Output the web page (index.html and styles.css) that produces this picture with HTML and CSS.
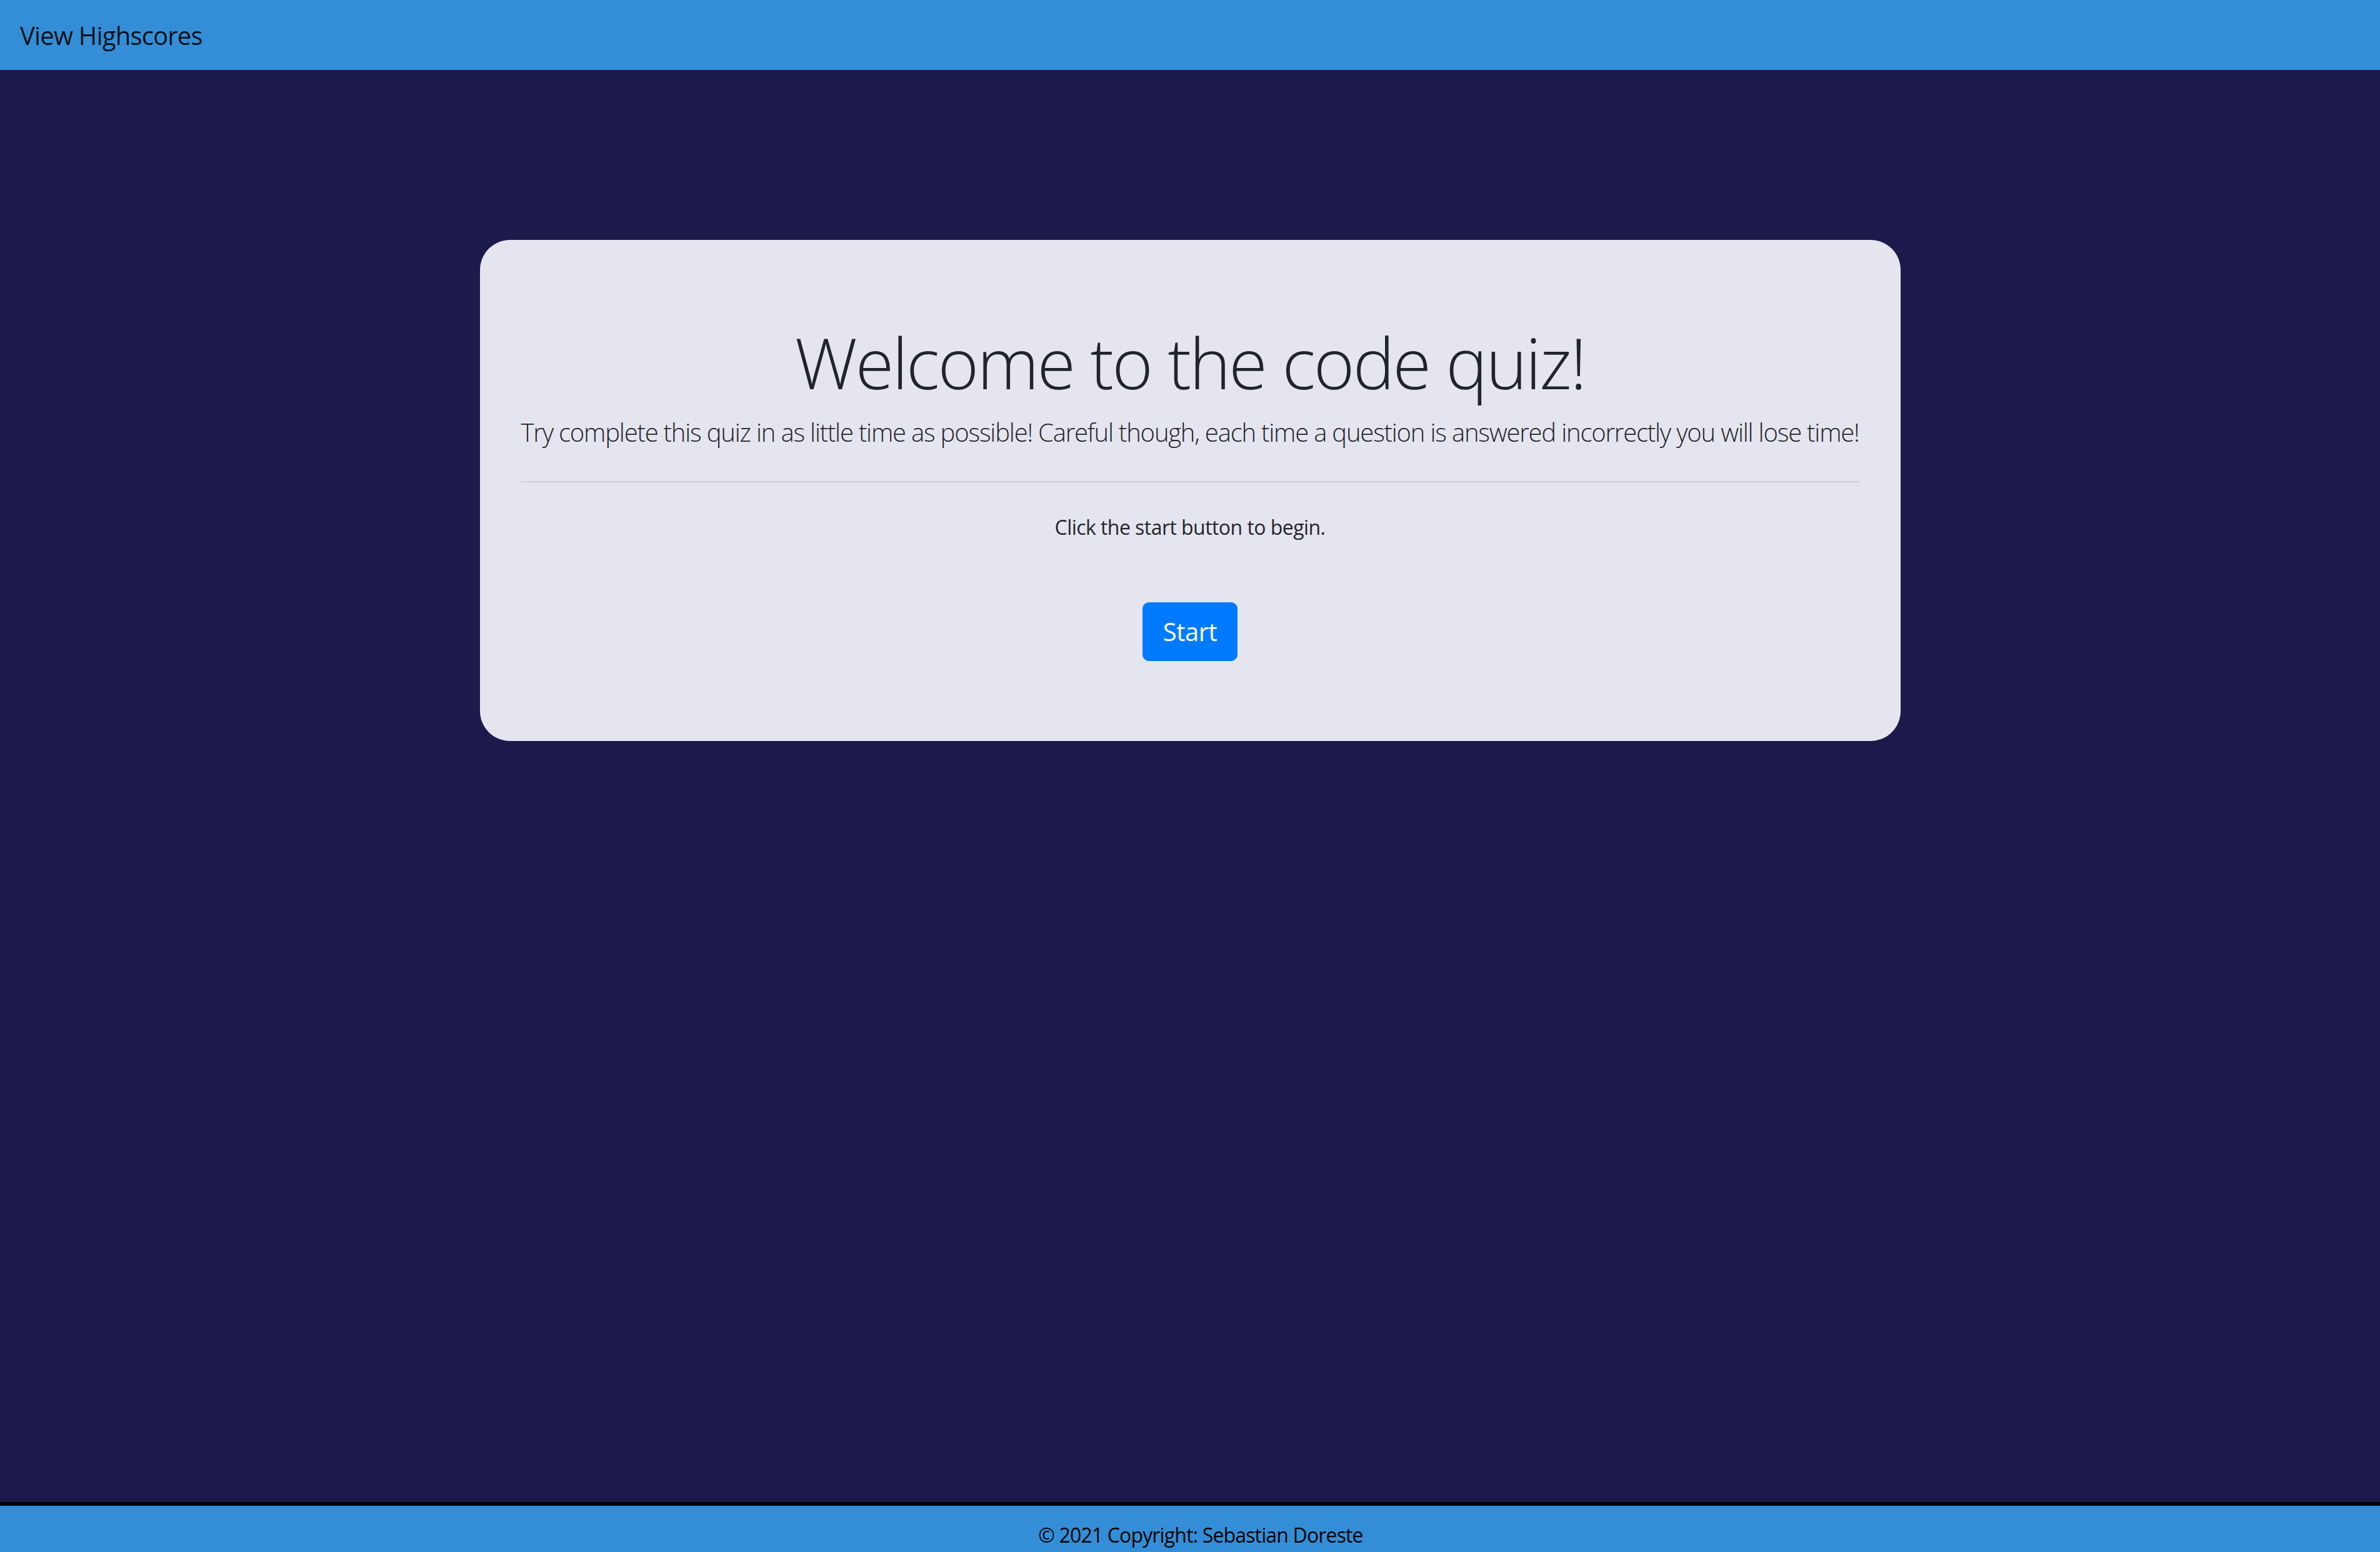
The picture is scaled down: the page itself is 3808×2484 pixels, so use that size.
FILE: index.html
```html
<!DOCTYPE html>
<html lang="en">
<head>
<meta charset="utf-8">
<title>Code Quiz</title>
<link rel="stylesheet" href="styles.css">
</head>
<body>
<header class="navbar">
  <a class="brand" href="#">View Highscores</a>
</header>
<main class="main">
  <section class="jumbotron">
    <h1 class="display">Welcome to the code quiz!</h1>
    <p class="lead">Try complete this quiz in as little time as possible! Careful though, each time a question is answered incorrectly you will lose time!</p>
    <hr class="divider">
    <p class="prompt">Click the start button to begin.</p>
    <div class="actions"><button class="btn-start" type="button">Start</button></div>
  </section>
</main>
<footer class="footer">© 2021 Copyright: Sebastian Doreste</footer>
</body>
</html>
```
FILE: styles.css
```css
html { font-size: 32px; }
body {
  margin: 0;
  font-family: "Open Sans", "Noto Sans", sans-serif;
  background: #1b1a4b;
  color: #212529;
  line-height: 1.5;
}
.navbar {
  background: #338ed7;
  padding: 16px 32px;
}
.brand {
  display: inline-block;
  padding: 11px 0 9px;
  font-size: 40px;
  line-height: 60px;
  letter-spacing: -0.8px;
  color: rgba(0, 0, 0, 0.9);
  text-decoration: none;
}
.main {
  min-height: 2292px;
  padding-top: 272px;
  box-sizing: border-box;
}
.jumbotron {
  width: 2273px;
  margin: 0 auto;
  box-sizing: border-box;
  padding: 129px 66px 128px;
  background: #e5e5ef;
  border-radius: 48px;
  text-align: center;
}
.display {
  font-size: 112px;
  font-weight: 300;
  line-height: 1.2;
  letter-spacing: -2.8px;
  margin: 0 0 15px;
}
.lead {
  font-size: 40px;
  font-weight: 300;
  line-height: 60px;
  letter-spacing: -1.2px;
  white-space: nowrap;
  margin: 0 0 48px;
}
.divider {
  margin: 0 0 48px;
  border: 0;
  border-top: 2px solid rgba(0, 0, 0, 0.1);
}
.prompt {
  font-size: 32px;
  line-height: 48px;
  letter-spacing: -0.55px;
  margin: 0 0 96px;
}
.btn-start {
  background: #007bff;
  color: #fff;
  border: 1px solid #007bff;
  border-radius: 10px;
  padding: 16px 32px;
  font-family: inherit;
  font-size: 40px;
  line-height: 60px;
  letter-spacing: -0.5px;
}
.footer {
  border-top: 6px solid #000;
  background: #338ed7;
  padding: 23px 0 19px 34px;
  text-align: center;
  font-size: 32px;
  line-height: 48px;
  letter-spacing: -0.85px;
  color: #000;
}
```
